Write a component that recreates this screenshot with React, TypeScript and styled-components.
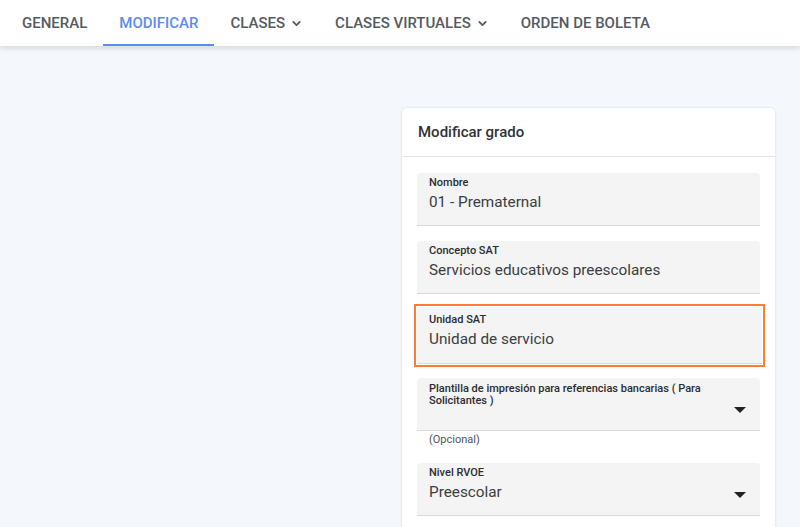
import React from "react";
import styled, { createGlobalStyle } from "styled-components";

const Global = createGlobalStyle`
  html, body { margin: 0; padding: 0; }
  body {
    background: #f4f8fc;
    font-family: Roboto, "Noto Sans", Arial, sans-serif;
    width: 800px;
    height: 527px;
    overflow: hidden;
  }
`;

const Page = styled.div`
  display: flex;
  flex-direction: column;
  height: 527px;
`;

const NavBar = styled.nav`
  flex-shrink: 0;
  display: flex;
  align-items: stretch;
  height: 46px;
  box-sizing: border-box;
  padding-left: 6px;
  background: #ffffff;
  box-shadow: 0 2px 6px rgba(0, 0, 0, 0.14);
  position: relative;
  z-index: 1;
`;

const Tab = styled.div<{ $active?: boolean }>`
  display: flex;
  align-items: center;
  gap: 5px;
  padding: 2px 16px 0;
  font-size: 15px;
  font-weight: 500;
  color: ${(p) => (p.$active ? "#5b8cf0" : "#555a60")};
  border-bottom: 2px solid ${(p) => (p.$active ? "#5b8cf0" : "transparent")};
`;

const Chevron = () => (
  <svg width="13" height="13" viewBox="0 0 24 24" fill="none" stroke="currentColor" strokeWidth="3.4" strokeLinecap="round" strokeLinejoin="round">
    <path d="M6 9l6 6 6-6" />
  </svg>
);

const Content = styled.main`
  flex: 1;
  display: flex;
  justify-content: flex-start;
  padding: 62px 0 0 402px;
`;

const Card = styled.section`
  width: 373px;
  background: #ffffff;
  border-radius: 5px;
  box-shadow: 0 0 3px rgba(0, 0, 0, 0.12);
  display: flex;
  flex-direction: column;
  align-self: flex-start;
`;

const CardHeader = styled.header`
  height: 48px;
  display: flex;
  align-items: center;
  padding: 0 16px;
  border-bottom: 1px solid #e3e3e3;
  font-size: 15px;
  font-weight: 500;
  color: #2f3337;
`;

const CardBody = styled.div`
  display: flex;
  flex-direction: column;
  padding: 16px 15px 0 15px;
`;

const FieldWrap = styled.div<{ $focus?: boolean }>`
  margin-bottom: ${(p) => (p.$focus ? "14px" : "15px")};
  border-radius: 0;
  outline: ${(p) => (p.$focus ? "2.5px solid #ff7a33" : "none")};
  outline-offset: 1px;
  margin-top: ${(p) => (p.$focus ? "-2px" : "0")};
  margin-right: ${(p) => (p.$focus ? "-2px" : "0")};
`;

const Field = styled.div<{ $h?: number; $top?: number }>`
  position: relative;
  height: ${(p) => p.$h ?? 53}px;
  background: #f4f4f4;
  border-radius: 4px 4px 0 0;
  border-bottom: 1px solid #d9d9d9;
  box-sizing: border-box;
  padding: ${(p) => p.$top ?? 4}px 12px 0 12px;
  display: flex;
  flex-direction: column;
`;

const Label = styled.div`
  font-size: 11px;
  font-weight: 500;
  color: #2a2d30;
  line-height: 12px;
  padding-right: 30px;
`;

const Value = styled.div`
  font-size: 15.3px;
  color: #3a3e42;
  margin-top: 3px;
  line-height: 20px;
`;

const Caret = styled.div`
  position: absolute;
  right: 14px;
  top: 29px;
  width: 0;
  height: 0;
  border-left: 6px solid transparent;
  border-right: 6px solid transparent;
  border-top: 6px solid #222;
`;

const Helper = styled.div`
  font-size: 11px;
  color: #50545a;
  padding: 2px 12px 0;
  margin-top: -15px;
  margin-bottom: 17px;
  height: 13px;
`;

export default function App() {
  return (
    <>
      <Global />
      <Page>
        <NavBar>
          <Tab>GENERAL</Tab>
          <Tab $active>MODIFICAR</Tab>
          <Tab>
            CLASES <Chevron />
          </Tab>
          <Tab>
            CLASES VIRTUALES <Chevron />
          </Tab>
          <Tab>ORDEN DE BOLETA</Tab>
        </NavBar>
        <Content>
          <Card>
            <CardHeader>Modificar grado</CardHeader>
            <CardBody>
              <FieldWrap>
                <Field>
                  <Label>Nombre</Label>
                  <Value>01 - Prematernal</Value>
                </Field>
              </FieldWrap>
              <FieldWrap>
                <Field>
                  <Label>Concepto SAT</Label>
                  <Value>Servicios educativos preescolares</Value>
                </Field>
              </FieldWrap>
              <FieldWrap $focus>
                <Field $h={57} $top={7}>
                  <Label>Unidad SAT</Label>
                  <Value>Unidad de servicio</Value>
                </Field>
              </FieldWrap>
              <FieldWrap>
                <Field $top={5}>
                  <Label>Plantilla de impresión para referencias bancarias ( Para Solicitantes )</Label>
                  <Caret />
                </Field>
              </FieldWrap>
              <Helper>(Opcional)</Helper>
              <FieldWrap>
                <Field>
                  <Label>Nivel RVOE</Label>
                  <Value>Preescolar</Value>
                  <Caret />
                </Field>
              </FieldWrap>
            </CardBody>
          </Card>
        </Content>
      </Page>
    </>
  );
}
